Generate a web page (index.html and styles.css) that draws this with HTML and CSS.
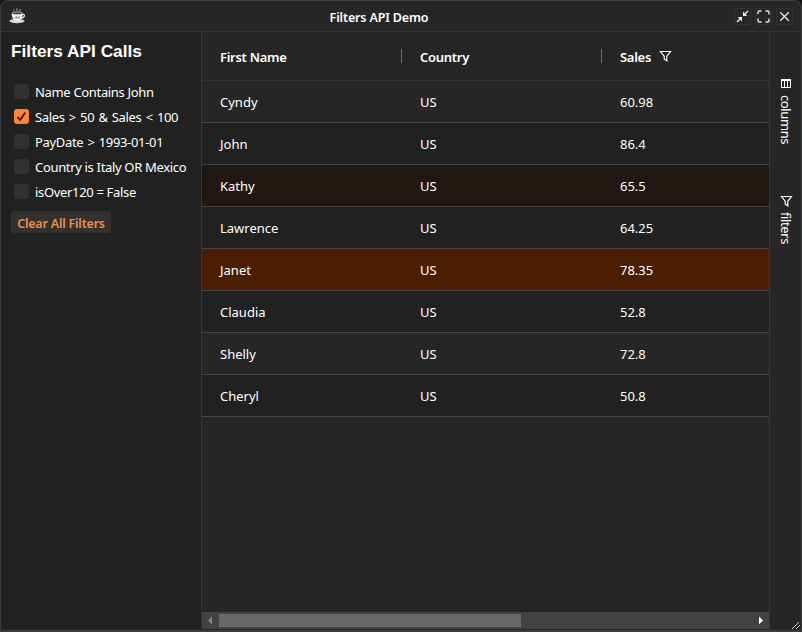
FILE: index.html
```html
<!DOCTYPE html>
<html lang="en">
<head>
<meta charset="utf-8">
<title>Filters API Demo</title>
<link rel="stylesheet" href="styles.css">
</head>
<body>
<div class="window">
  <header class="titlebar">
    <svg class="logo" width="18" height="18" viewBox="0 0 18 18">
      <ellipse cx="8" cy="14" rx="7.6" ry="2.2" fill="#d5d5d5"/>
      <path d="M13 7.500c3.200-1.200 3.600 3-1 3.700" fill="none" stroke="#e4e4e4" stroke-width="1.200"/>
      <path d="M2.700 6.500h11c0 4-1.700 7.500-5.500 7.500s-5.500-3.500-5.500-7.500z" fill="#f1f1f1"/>
      <ellipse cx="8.200" cy="6.300" rx="5.200" ry="1.300" fill="#4a3329" stroke="#ddd" stroke-width=".7"/>
      <path d="M5.500 10.500l2-1.500 1.500 1 2-1v2.500H6z" fill="#7fa9c9"/>
      <path d="M5.500 4.500l-1-2M8 4.500V1.200M10.500 4.500l1-2.300" stroke="#a5a5a5" fill="none"/>
    </svg>
    <h1 class="title">Filters API Demo</h1>
    <div class="controls">
      <span class="control"><svg width="15" height="15" viewBox="0 0 15 15"><path d="M2 13l4-4M13 2L9 6" stroke="#ddd" stroke-width="1.600"/><path d="M7 8v4.500L2.700 8zM8 7V2.500L12.300 7z" fill="#eee"/></svg></span>
      <span class="control"><svg width="15" height="15" viewBox="0 0 15 15"><path d="M2 5V3.500Q2 2 3.500 2H5.500M9.500 2h2Q13 2 13 3.500V5.500M13 9.500v2q0 1.500-1.500 1.500h-2M5.500 13h-2Q2 13 2 11.500v-2" fill="none" stroke="#e6e6e6" stroke-width="1.400"/></svg></span>
      <span class="control"><svg width="15" height="15" viewBox="0 0 15 15"><path d="M3.200 3.200l8.600 8.600M11.800 3.200l-8.600 8.600" stroke="#eee" stroke-width="1.300"/></svg></span>
    </div>
  </header>
  <div class="content">
    <aside class="panel">
      <h2 class="heading">Filters API Calls</h2>
      <div class="options">
        <label class="option"><span class="box"></span><span>Name Contains John</span></label>
        <label class="option range"><span class="box checked"><svg width="15" height="15" viewBox="0 0 15 15"><path d="M3.500 8l2.700 3 5-7.500" fill="none" stroke="#17120e" stroke-width="1.600"/></svg></span><span>Sales &gt; 50 &amp; Sales &lt; 100</span></label>
        <label class="option range"><span class="box"></span><span>PayDate &gt; 1993-01-01</span></label>
        <label class="option"><span class="box"></span><span>Country is Italy OR Mexico</span></label>
        <label class="option"><span class="box"></span><span>isOver120 = False</span></label>
      </div>
      <button class="clear" type="button">Clear All Filters</button>
    </aside>
    <main class="grid">
      <div class="row head">
        <div class="cell">First Name</div><div class="cell">Country</div>
        <div class="cell">Sales<svg class="funnel" width="13" height="13" viewBox="0 0 13 13"><path d="M1.500 1.500h10L7.800 6.200v4.600L5.200 9V6.200z" fill="none" stroke="#fff" stroke-width="1.200"/></svg></div>
      </div>
      <div class="row"><div class="cell">Cyndy</div><div class="cell">US</div><div class="cell">60.98</div></div>
      <div class="row alt"><div class="cell">John</div><div class="cell">US</div><div class="cell">86.4</div></div>
      <div class="row hover"><div class="cell">Kathy</div><div class="cell">US</div><div class="cell">65.5</div></div>
      <div class="row alt"><div class="cell">Lawrence</div><div class="cell">US</div><div class="cell">64.25</div></div>
      <div class="row selected"><div class="cell">Janet</div><div class="cell">US</div><div class="cell">78.35</div></div>
      <div class="row alt"><div class="cell">Claudia</div><div class="cell">US</div><div class="cell">52.8</div></div>
      <div class="row"><div class="cell">Shelly</div><div class="cell">US</div><div class="cell">72.8</div></div>
      <div class="row alt"><div class="cell">Cheryl</div><div class="cell">US</div><div class="cell">50.8</div></div>
      <div class="scrollbar">
        <svg class="arrow" width="17" height="16" viewBox="0 0 17 16"><path d="M10 4.500v8L6 8.500z" fill="#8a8a8a"/></svg>
        <div class="track"><div class="thumb"></div></div>
        <svg class="arrow" width="17" height="16" viewBox="0 0 17 16"><path d="M7 4.500v8l4-4z" fill="#fff"/></svg>
      </div>
    </main>
    <nav class="rail">
      <div class="tab columns"><svg width="12" height="11" viewBox="0 0 12 11"><path d="M1.500 1.500h9v8h-9zM4.500 1.500v8M7.500 1.500v8" fill="none" stroke="#fff"/><path d="M1 1h10v2H1z" fill="#fff"/></svg><span>columns</span></div>
      <div class="tab filters"><svg width="13" height="13" viewBox="0 0 13 13"><path d="M1.500 1.500h10L7.800 6.200v4.600L5.200 9V6.200z" fill="none" stroke="#fff" stroke-width="1.200"/></svg><span>filters</span></div>
    </nav>
  </div>
  <svg class="grip" width="10" height="10" viewBox="0 0 10 10"><path d="M1 9l7-7M5 9l4-4" stroke="#ccc"/></svg>
</div>
</body>
</html>
```
FILE: styles.css
```css
* { box-sizing: border-box; }
html { height: 100%; background: #151515; }
body {
  margin: 0;
  height: 100%;
  color: #fff;
  font: 13px/20px "Noto Sans", sans-serif;
}
.window {
  position: relative;
  display: flex;
  flex-direction: column;
  height: 100%;
  padding-bottom: 1px;
  border: 1px solid #3c3c3c;
  border-bottom-width: 2px;
  border-radius: 8px 8px 0 0;
  background: #262626;
  overflow: hidden;
}
.titlebar {
  display: grid;
  grid-template-columns: 80px 1fr 67px;
  align-items: center;
  height: 31px;
  flex: none;
  border-bottom: 1px solid #333;
}
.logo { margin-left: 8px; }
.title { margin: 0; padding: 3px 57px 0 0; text-align: center; font-size: 12.5px; font-weight: 600; letter-spacing: -.15px; }
.controls { display: flex; gap: 4px; }
.control { width: 17px; height: 17px; border: 1px solid #343434; border-radius: 3px; }
.control svg { display: block; }
.content { display: flex; flex: 1; min-height: 0; }
.panel { width: 201px; flex: none; padding: 9px 10px; border-right: 1px solid #363636; background: #212121; }
.heading { margin: 0 0 18px; font: bold 17.3px/20px "Liberation Sans", sans-serif; }
.option { display: flex; align-items: center; height: 25px; gap: 6px; padding-left: 3px; white-space: nowrap; letter-spacing: -.33px; }
.range { word-spacing: 1.1px; }
.box { width: 15px; height: 15px; flex: none; border-radius: 3px; background: #333130; }
.checked { background: #fd8330; }
.box svg { display: block; }
.clear {
  display: block;
  width: 100px;
  height: 22px;
  margin-top: 7px;
  padding: 4px 0 0;
  border: 0;
  border-radius: 3px;
  background: #333130;
  color: #ee8d4c;
  font: 600 12.5px/18px "Noto Sans", sans-serif;
  letter-spacing: -.22px;
}
.grid { display: flex; flex-direction: column; width: 567px; }
.row { display: grid; grid-template-columns: 200px 200px 1fr; height: 42px; flex: none; border-bottom: 1px solid #444; }
.cell { display: flex; align-items: center; padding-left: 18px; }
.head { height: 49px; border-color: #343434; font-weight: 600; letter-spacing: -.28px; }
.head .cell { padding-top: 1px; }
.head .cell:not(:last-child) { background: linear-gradient(#707070, #707070) 199px 17px / 1px 14px no-repeat; }
.alt { background: #212121; }
.hover { background: #211712; }
.selected { background: #4b1e02; }
.funnel { margin: -1px 0 0 8px; }
.scrollbar { display: flex; height: 17px; margin-top: auto; background: #424242; }
.track { flex: 1; padding: 2px 0; }
.thumb { width: 302px; height: 13px; background: #696969; }
.rail { flex: 1; padding-top: 46px; border-left: 1px solid #363636; }
.tab { display: flex; flex-direction: column; align-items: center; padding-left: 1px; gap: 6px; }
.tab span { writing-mode: vertical-rl; line-height: 18px; letter-spacing: -.4px; }
.columns { height: 117px; }
.filters { gap: 4px; }
.grip { position: absolute; right: 0; bottom: 0; }
```
